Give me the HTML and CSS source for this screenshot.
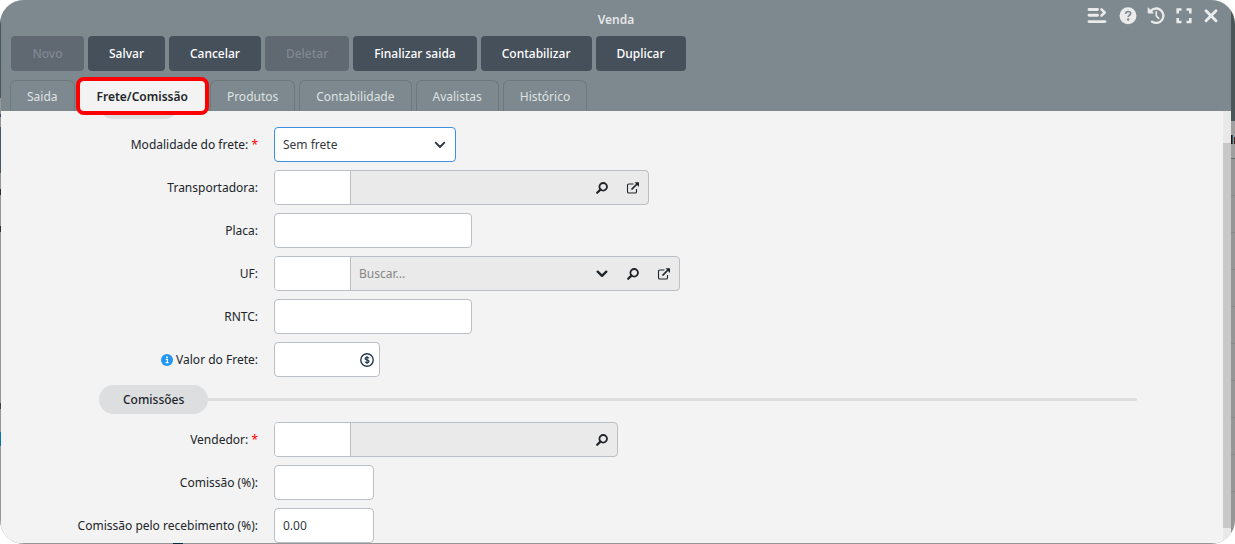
FILE: index.html
```html
<!DOCTYPE html>
<html lang="pt-BR">
<head>
<meta charset="utf-8">
<meta name="viewport" content="width=device-width, initial-scale=1">
<title>Venda</title>
<link rel="stylesheet" href="styles.css">
</head>
<body>
<svg class="sprite" aria-hidden="true">
  <symbol id="i-search" viewBox="0 0 12 12"><circle cx="7.2" cy="4.8" r="3.8" fill="none" stroke="currentColor" stroke-width="1.8"/><path d="M4.4 7.6 1.2 10.8" stroke="currentColor" stroke-width="2.2" stroke-linecap="round"/></symbol>
  <symbol id="i-open" viewBox="0 0 14 12"><path d="M7.5 2H2.8a1.3 1.3 0 0 0-1.3 1.3v6.4A1.3 1.3 0 0 0 2.800 11h6.400a1.3 1.3 0 0 0 1.3-1.3V7" fill="none" stroke="currentColor" stroke-width="1.1"/><path d="M5.500 7.500 11 2" stroke="currentColor" stroke-width="1.700"/><path d="M8.500 .3H13V5z" fill="currentColor"/></symbol>
  <symbol id="i-chevron" viewBox="0 0 12 8"><path d="M1.7 1.7 6 5.8l4.3-4.1" fill="none" stroke="currentColor" stroke-width="2.400" stroke-linecap="round" stroke-linejoin="round"/></symbol>
  <symbol id="i-caret" viewBox="0 0 12 8"><path d="M1.700 1.700 6 6l4.300-4.300" fill="none" stroke="currentColor" stroke-width="1.900" stroke-linecap="round" stroke-linejoin="round"/></symbol>
</svg>

<div class="backdrop">
  <span class="backdrop-text">In</span>
  <main class="modal">
    <header class="modal-header">
      <div class="titlebar">
        <h1 class="title">Venda</h1>
        <div class="tools">
          <button class="tool" type="button" aria-label="Menu"><svg width="20" height="18" viewBox="0 0 20 18" fill="none" stroke="currentColor" stroke-width="2.9" stroke-linecap="round"><path d="M2 2.500h8.500M2 8.300h8.500M2 14.600h16"/><path d="M14.500 2.300 17.700 5.500l-3.200 3.200" stroke-width="2.500" stroke-linejoin="round"/></svg></button>
          <button class="tool" type="button" aria-label="Ajuda"><svg width="18" height="18" viewBox="0 0 18 18"><circle cx="9" cy="8.700" r="8.500" fill="currentColor"/><path d="M6.600 6.800c.2-1.700 1.200-2.300 2.500-2.300 1.500 0 2.500.8 2.500 2 0 1.700-2.400 1.700-2.400 3.500" fill="none" stroke="#7d898e" stroke-width="1.700"/><circle cx="9.200" cy="12.500" r="1.200" fill="#7d898e"/></svg></button>
          <button class="tool" type="button" aria-label="Histórico de alterações"><svg width="18" height="18" viewBox="0 0 18 18" fill="none" stroke="currentColor" stroke-width="2.300" stroke-linecap="round" stroke-linejoin="round"><path d="M3.200 4.700A7.200 7.200 0 1 1 5 14.600"/><path d="M1.200 1.200v4.800H6z" fill="currentColor" stroke-width="1"/><path d="M9.300 4.800v4.200l2.400 2.300" stroke-width="1.700"/></svg></button>
          <button class="tool" type="button" aria-label="Tela cheia"><svg width="18" height="18" viewBox="0 0 18 18" fill="none" stroke="currentColor" stroke-width="2.600"><path d="M2.700 6.500V2.500h3.800M11.500 2.500h3.800v4M15.300 11v4h-3.800M6.500 15H2.700v-4"/></svg></button>
          <button class="tool" type="button" aria-label="Fechar"><svg width="16" height="18" viewBox="0 0 16 18" fill="none" stroke="currentColor" stroke-width="2.900" stroke-linecap="round"><path d="m3 3.700 10 10M13 3.700l-10 10"/></svg></button>
        </div>
      </div>
      <div class="actions">
        <button class="btn" type="button" disabled>Novo</button>
        <button class="btn" type="button">Salvar</button>
        <button class="btn" type="button">Cancelar</button>
        <button class="btn" type="button" disabled>Deletar</button>
        <button class="btn" type="button">Finalizar saida</button>
        <button class="btn" type="button">Contabilizar</button>
        <button class="btn" type="button">Duplicar</button>
      </div>
      <div class="tabs" role="tablist">
        <button class="tab" type="button" role="tab">Saida</button>
        <button class="tab tab-active" type="button" role="tab" aria-selected="true">Frete/Comissão</button>
        <button class="tab" type="button" role="tab">Produtos</button>
        <button class="tab" type="button" role="tab">Contabilidade</button>
        <button class="tab" type="button" role="tab">Avalistas</button>
        <button class="tab" type="button" role="tab">Histórico</button>
      </div>
    </header>

    <div class="modal-body">
      <div class="viewport">
        <form class="form">
          <div class="section"><div class="pill pill-first"></div></div>
          <div class="row">
            <label class="label" for="modalidade">Modalidade do frete: <span class="required">*</span></label>
            <div class="field-select">
              <select class="control select" id="modalidade"><option>Sem frete</option></select>
              <svg class="select-arrow" width="12" height="8"><use href="#i-caret"/></svg>
            </div>
          </div>
          <div class="row">
            <label class="label" for="transportadora">Transportadora:</label>
            <div class="lookup">
              <input class="code" id="transportadora" type="text">
              <input class="lookup-text" type="text" readonly aria-label="Nome da transportadora">
              <button class="icon-btn" type="button" aria-label="Pesquisar"><svg width="12" height="12"><use href="#i-search"/></svg></button>
              <button class="icon-btn" type="button" aria-label="Abrir"><svg width="14" height="12"><use href="#i-open"/></svg></button>
            </div>
          </div>
          <div class="row">
            <label class="label" for="placa">Placa:</label>
            <input class="control medium" id="placa" type="text">
          </div>
          <div class="row">
            <label class="label" for="uf">UF:</label>
            <div class="lookup">
              <input class="code" id="uf" type="text">
              <input class="lookup-text" type="text" placeholder="Buscar..." aria-label="Buscar UF">
              <button class="icon-btn" type="button" aria-label="Listar"><svg width="12" height="8"><use href="#i-chevron"/></svg></button>
              <button class="icon-btn" type="button" aria-label="Pesquisar"><svg width="12" height="12"><use href="#i-search"/></svg></button>
              <button class="icon-btn" type="button" aria-label="Abrir"><svg width="14" height="12"><use href="#i-open"/></svg></button>
            </div>
          </div>
          <div class="row">
            <label class="label" for="rntc">RNTC:</label>
            <input class="control medium" id="rntc" type="text">
          </div>
          <div class="row">
            <label class="label" for="valor"><svg class="info" width="12" height="12" viewBox="0 0 12 12"><circle cx="6" cy="6" r="6" fill="#2196f3"/><path d="M4.800 5.300h1.600v3.200M4.600 8.700h3" fill="none" stroke="#fff" stroke-width="1.200"/><circle cx="6" cy="3.200" r=".9" fill="#fff"/></svg>Valor do Frete:</label>
            <div class="money">
              <input class="money-input" id="valor" type="text">
              <svg width="14" height="14" viewBox="0 0 14 14" fill="none" stroke="currentColor"><circle cx="7" cy="7" r="6.200" stroke-width="1.400"/><path d="M9 5.200C8.600 4.500 7.900 4.300 7 4.300c-1.100 0-1.900.4-1.900 1.300C5.100 7.400 9 6.400 9 8.400c0 .9-.9 1.300-2 1.300-1 0-1.800-.3-2.100-1.100M7 3v8" stroke-width="1.200"/></svg>
            </div>
          </div>
          <div class="section"><h2 class="pill">Comissões</h2></div>
          <div class="row">
            <label class="label" for="vendedor">Vendedor: <span class="required">*</span></label>
            <div class="lookup">
              <input class="code" id="vendedor" type="text">
              <input class="lookup-text" type="text" readonly aria-label="Nome do vendedor">
              <button class="icon-btn" type="button" aria-label="Pesquisar"><svg width="12" height="12"><use href="#i-search"/></svg></button>
            </div>
          </div>
          <div class="row">
            <label class="label" for="comissao">Comissão (%):</label>
            <input class="control small" id="comissao" type="text">
          </div>
          <div class="row">
            <label class="label" for="recebimento">Comissão pelo recebimento (%):</label>
            <input class="control small" id="recebimento" type="text" value="0.00">
          </div>
        </form>
      </div>
      <div class="scrollbar"><div class="thumb"></div></div>
    </div>
  </main>
</div>
</body>
</html>
```

FILE: styles.css
```css
* {
  box-sizing: border-box;
}

body {
  margin: 0;
  background: #fff;
  color: #212529;
  font: 12px/16px "Noto Sans", sans-serif;
}

button,
input,
select {
  margin: 0;
  padding: 0;
  border: 0;
  color: inherit;
  font: inherit;
}

.sprite {
  position: absolute;
  width: 0;
  height: 0;
}

/* Dimmed page behind the dialog */
.backdrop {
  position: relative;
  height: 100vh;
  padding: 0 4px 1px 1px;
  overflow: hidden;
  border-radius: 24px;
  background:
    linear-gradient(#002b40, #002b40) 173px 100% / 10px 1px no-repeat,
    linear-gradient(#4a5658 98px, #969696 98px 114px, #3b4a75 114px 117px, #969696 117px 127px, #4a5660 127px 173px, #969696 173px 189px, #203040 189px 195px, #969696 195px 226px, #303030 226px 232px, #969696 232px 403px, #404040 403px 409px, #969696 409px 432px, #0675a8 432px 446px, #969696 446px) 0 0 / 1px 100% no-repeat,
    linear-gradient(#4a5658 121px, #a0a0a0 121px 158px, #69706f 158px 159px, transparent 159px) 100% 0 / 4px 100% no-repeat,
    repeating-linear-gradient(#969696 0 10px, #888 10px 11px, #969696 11px 37px);
}

.backdrop-text {
  position: absolute;
  top: 132px;
  left: calc(100% - 5px);
  color: #111;
  font-family: "Liberation Sans", sans-serif;
  font-weight: 700;
}

.modal {
  position: relative;
  display: flex;
  flex-direction: column;
  height: 100%;
  background: #f3f3f3;
}

.modal-header {
  position: relative;
  z-index: 1;
  background: #7d898e;
  color: #e3e6e7;
}

.titlebar {
  display: grid;
  grid-template-columns: 1fr auto 1fr;
  height: 36px;
}

.title {
  grid-column: 2;
  margin: 12px 0 0;
  font-size: 12px;
  font-weight: 600;
}

.tools {
  display: flex;
  gap: 10px;
  justify-content: flex-end;
  padding: 7px 12px 0 0;
}

.tool {
  display: flex;
  height: 18px;
  background: none;
  color: #ebebeb;
}

.tool:first-child {
  margin-right: 2px;
}

.actions {
  display: flex;
  gap: 4px;
  padding: 0 10px;
}

.btn {
  min-width: 73px;
  height: 35px;
  padding: 0 21px;
  border-radius: 4px;
  background: #46505a;
  color: #fff;
  font-weight: 500;
}

.btn:disabled {
  background: #606871;
  color: #808894;
}

.tabs {
  display: flex;
  gap: 4px;
  padding: 9px 9px 0;
}

.tab {
  height: 31px;
  padding: 1px 16px 0;
  border: 1px solid #6c787e;
  border-bottom: 0;
  border-radius: 6px 6px 0 0;
  background: none;
  color: #dfe2e4;
}

.tab-active {
  position: relative;
  padding: 1px 17px 0;
  border-color: #f3f3f3;
  background: #f3f3f3;
  color: #212529;
  font-weight: 600;
}

.tab-active::after {
  position: absolute;
  inset: -4px;
  border: 4px solid #f00;
  border-radius: 8px;
  content: "";
}

.modal-body {
  display: flex;
  flex: 1;
  min-height: 0;
}

.viewport {
  flex: 1;
  overflow: hidden;
}

/* The form is shown scrolled down past its first heading */
.form {
  display: flex;
  flex-direction: column;
  gap: 8px;
  margin-top: -21px;
}

.section {
  display: flex;
  align-items: center;
  padding: 0 86px 0 98px;
}

.section::after {
  flex: 1;
  height: 3px;
  border-radius: 0 2px 2px 0;
  background: #dcdee0;
  content: "";
}

.pill {
  margin: 0;
  padding: 7px 24px 6px;
  border-radius: 16px;
  background: #dcdee0;
  font-size: 12px;
  font-weight: 500;
}

.pill-first {
  width: 80px;
  height: 29px;
}

.row {
  display: grid;
  grid-template-columns: 257px auto;
  column-gap: 16px;
  align-items: center;
  justify-content: start;
}

.label {
  text-align: right;
}

.required {
  color: #f00;
}

.info {
  margin-right: 3px;
  vertical-align: -2px;
}

.control,
.lookup,
.money {
  height: 35px;
  border: 1px solid #b9bfc5;
  border-radius: 4px;
  background: #fff;
}

.control {
  padding: 0 8px;
  color: #343a40;
}

.small {
  width: 100px;
}

.medium {
  width: 198px;
}

.field-select {
  position: relative;
  width: 182px;
}

.select {
  width: 100%;
  border-color: #3d8fe0;
  appearance: none;
}

.select-arrow {
  position: absolute;
  top: 14px;
  right: 10px;
  color: #343a40;
  pointer-events: none;
}

.lookup {
  display: flex;
  overflow: hidden;
  background: #eaeaea;
}

.code {
  width: 76px;
  padding: 0 8px;
  border-right: 1px solid #b9bfc5;
  background: #fff;
}

.lookup-text {
  width: 235px;
  padding: 0 8px;
  background: none;
}

.lookup-text::placeholder {
  color: #868686;
}

.icon-btn {
  display: flex;
  align-items: center;
  justify-content: center;
  width: 31px;
  background: none;
}

.money {
  display: flex;
  align-items: center;
  width: 106px;
  padding: 0 5px 0 8px;
  color: #26384f;
}

.money-input {
  flex: 1;
  min-width: 0;
  background: none;
}

.scrollbar {
  display: flex;
  width: 8px;
  padding: 32px 0 15px;
  background: #e9e9e9;
}

.thumb {
  flex: 1;
  background: #c8c8c8;
}
```
